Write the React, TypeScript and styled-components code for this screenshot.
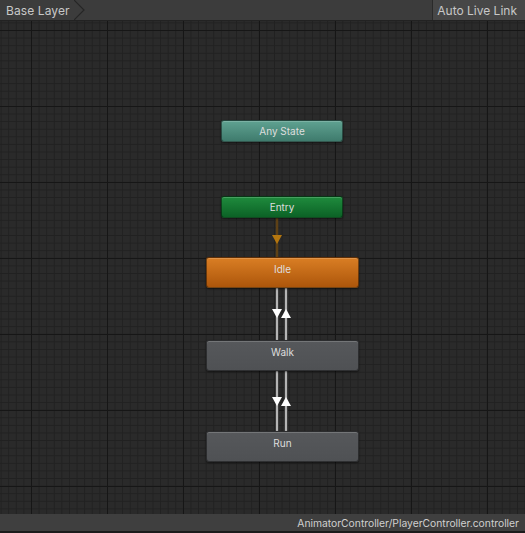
import React from "react";
import styled, { createGlobalStyle } from "styled-components";

const Global = createGlobalStyle`
  html, body { margin: 0; padding: 0; background: #282828; }
  body { font-family: Inter, "Noto Sans", "Liberation Sans", sans-serif; }
`;

const Window = styled.div`
  width: 525px;
  height: 533px;
  display: flex;
  flex-direction: column;
  background: #191919;
  overflow: hidden;
`;

const TopBar = styled.div`
  height: 20px;
  flex: 0 0 20px;
  display: flex;
  align-items: stretch;
  background: #3c3c3c;
  border-bottom: 1px solid #222222;
`;

const Crumb = styled.div`
  display: flex;
  align-items: center;
  padding-left: 6px;
  color: #c8c8c8;
  font-size: 12px;
  letter-spacing: 0.1px;
  gap: 4px;
`;

const Spacer = styled.div`
  flex: 1;
`;

const LiveLink = styled.div`
  display: flex;
  align-items: center;
  padding: 0 8px 0 4px;
  background: #474747;
  border-left: 1px solid #2a2a2a;
  color: #c8c8c8;
  font-size: 12px;
`;

const Canvas = styled.div`
  position: relative;
  flex: 1;
  background-color: #2a2a2a;
  background-image:
    linear-gradient(to right, #161616 1px, transparent 1px),
    linear-gradient(to bottom, #161616 1px, transparent 1px),
    linear-gradient(to right, #212121 1px, transparent 1px),
    linear-gradient(to bottom, #212121 1px, transparent 1px);
  background-size: 76px 76px, 76px 76px, 7.6px 7.6px, 7.6px 7.6px;
  background-position: 31px 9px, 31px 9px, 31px 9px, 31px 9px;
`;

const Overlay = styled.svg`
  position: absolute;
  left: 0;
  top: 0;
  width: 100%;
  height: 100%;
`;

type Kind = "any" | "entry" | "default" | "normal";

const fills: Record<Kind, string> = {
  any: "linear-gradient(to bottom, #5fa291, #3f7b6d)",
  entry: "linear-gradient(to bottom, #1f8b3d, #0c6226)",
  default: "linear-gradient(to bottom, #d97e24, #ad560b)",
  normal: "linear-gradient(to bottom, #56585b, #4f5154)",
};

const Node = styled.div<{ $kind: Kind; $x: number; $y: number; $w: number; $h: number }>`
  position: absolute;
  left: ${(p) => p.$x}px;
  top: ${(p) => p.$y}px;
  width: ${(p) => p.$w}px;
  height: ${(p) => p.$h}px;
  box-sizing: border-box;
  display: flex;
  align-items: center;
  justify-content: center;
  padding-bottom: ${(p) => (p.$h > 25 ? 7 : 1)}px;
  background: ${(p) => fills[p.$kind]};
  border: 1px solid rgba(0, 0, 0, 0.45);
  border-radius: 3px;
  box-shadow: inset 0 1px 0 rgba(255, 255, 255, 0.18), 0 1px 2px rgba(0, 0, 0, 0.5);
  color: #dedede;
  font-size: 10px;
`;

const StatusBar = styled.div`
  height: 17px;
  flex: 0 0 17px;
  display: flex;
  align-items: center;
  justify-content: flex-end;
  padding-right: 6px;
  background: #3f3f3f;
  border-bottom: 2px solid #1b1b1b;
  color: #cfcfcf;
  font-size: 10.3px;
`;

const Pair = ({ y1, y2, ay }: { y1: number; y2: number; ay: number }) => (
  <g>
    <line x1={277} y1={y1} x2={277} y2={y2} stroke="#3a3a3a" strokeWidth={4} />
    <line x1={286} y1={y1} x2={286} y2={y2} stroke="#3a3a3a" strokeWidth={4} />
    <line x1={277} y1={y1} x2={277} y2={y2} stroke="#b4b4b4" strokeWidth={2} />
    <line x1={286} y1={y1} x2={286} y2={y2} stroke="#b4b4b4" strokeWidth={2} />
    <polygon points={`272,${ay} 282,${ay} 277,${ay + 9}`} fill="#ffffff" />
    <polygon points={`281,${ay + 9} 291,${ay + 9} 286,${ay}`} fill="#ffffff" />
  </g>
);

export default function App() {
  return (
    <>
      <Global />
      <Window>
        <TopBar>
          <Crumb>
            Base Layer
            <svg width="12" height="20" viewBox="0 0 12 20">
              <polyline points="0,0 10,10 0,20" fill="none" stroke="#262626" strokeWidth="1.2" />
            </svg>
          </Crumb>
          <Spacer />
          <LiveLink>Auto Live Link</LiveLink>
        </TopBar>
        <Canvas>
          <Overlay>
            <line x1={277} y1={197} x2={277} y2={236} stroke="#5e4116" strokeWidth={2.5} />
            <polygon points="272,214 282,214 277,223" fill="#b5770f" />
            <Pair y1={266} y2={319} ay={288} />
            <Pair y1={349} y2={410} ay={376} />
          </Overlay>
          <Node $kind="any" $x={221} $y={99} $w={122} $h={22}>Any State</Node>
          <Node $kind="entry" $x={221} $y={175} $w={122} $h={22}>Entry</Node>
          <Node $kind="default" $x={206} $y={236} $w={153} $h={31}>Idle</Node>
          <Node $kind="normal" $x={206} $y={319} $w={153} $h={31}>Walk</Node>
          <Node $kind="normal" $x={206} $y={410} $w={153} $h={31}>Run</Node>
        </Canvas>
        <StatusBar>AnimatorController/PlayerController.controller</StatusBar>
      </Window>
    </>
  );
}
